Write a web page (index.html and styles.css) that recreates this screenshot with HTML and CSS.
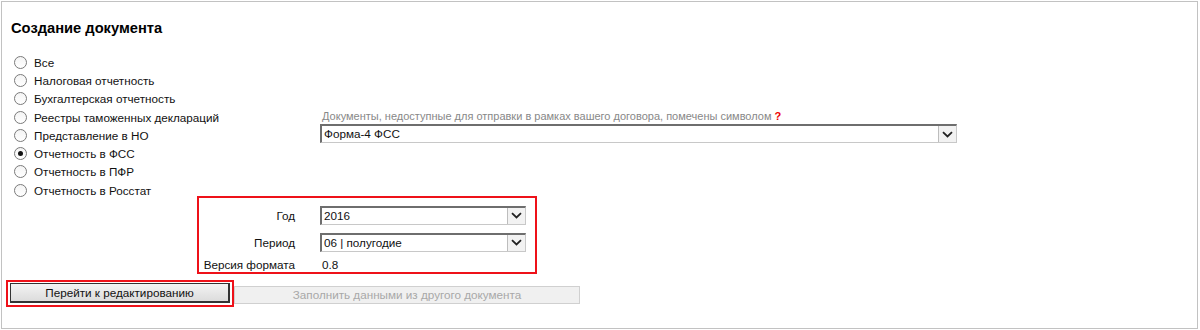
FILE: index.html
```html
<!DOCTYPE html>
<html lang="ru">
<head>
    <meta charset="UTF-8">
    <title>Создание документа</title>
    <link rel="stylesheet" href="styles.css">
</head>
<body>
    <div class="panel">
        <h1 class="title">Создание документа</h1>

        <div class="top">
            <ul class="kinds">
                <li><span class="radio"></span>Все</li>
                <li><span class="radio"></span>Налоговая отчетность</li>
                <li><span class="radio"></span>Бухгалтерская отчетность</li>
                <li><span class="radio"></span>Реестры таможенных деклараций</li>
                <li><span class="radio"></span>Представление в НО</li>
                <li><span class="radio checked"></span>Отчетность в ФСС</li>
                <li><span class="radio"></span>Отчетность в ПФР</li>
                <li><span class="radio"></span>Отчетность в Росстат</li>
            </ul>

            <div class="doc">
                <div class="hint">Документы, недоступные для отправки в рамках вашего договора, помечены символом <span class="mark">?</span></div>
                <div class="select wide">
                    <span class="value">Форма-4 ФСС</span>
                    <span class="arrow"><svg width="11" height="7" viewBox="0 0 11 7"><path d="M1 1.2 L5.5 5.5 L10 1.2" fill="none" stroke="#222" stroke-width="1.8"/></svg></span>
                </div>
            </div>
        </div>

        <div class="params">
            <div class="label">Год</div>
            <div class="select">
                <span class="value">2016</span>
                <span class="arrow"><svg width="11" height="7" viewBox="0 0 11 7"><path d="M1 1.2 L5.5 5.5 L10 1.2" fill="none" stroke="#222" stroke-width="1.8"/></svg></span>
            </div>

            <div class="label">Период</div>
            <div class="select">
                <span class="value">06 | полугодие</span>
                <span class="arrow"><svg width="11" height="7" viewBox="0 0 11 7"><path d="M1 1.2 L5.5 5.5 L10 1.2" fill="none" stroke="#222" stroke-width="1.8"/></svg></span>
            </div>

            <div class="label last">Версия формата</div>
            <div class="plain last">0.8</div>
        </div>

        <div class="actions">
            <div class="highlight">
                <button class="btn">Перейти к редактированию</button>
            </div>
            <button class="btn disabled" disabled>Заполнить данными из другого документа</button>
        </div>
    </div>
</body>
</html>
```

FILE: styles.css
```css
body {
    margin: 0;
    padding: 0;
    background: #fff;
    font-family: 'Liberation Sans', Arial, sans-serif;
    font-size: 11.7px;
    color: #111;
}
.panel {
    margin: 1px 2px 0 1px;
    height: 326px;
    border: 1px solid #c2c2c2;
    padding: 0 9px;
}
.title {
    margin: 17px 0 0;
    font-size: 14.7px;
    line-height: 18px;
    font-weight: bold;
    color: #000;
}
.top {
    display: flex;
    margin-top: 16px;
}
.kinds {
    list-style: none;
    margin: 0;
    padding: 0;
    width: 309px;
}
.kinds li {
    display: flex;
    align-items: center;
    height: 18.3px;
    padding-left: 3px;
}
.radio {
    width: 11px;
    height: 11px;
    border: 1px solid #7a7a7a;
    border-radius: 50%;
    background: linear-gradient(#f4f4f4, #fff);
    margin-right: 7px;
    position: relative;
    flex-shrink: 0;
}
.radio.checked::after {
    content: "";
    position: absolute;
    left: 3px;
    top: 3px;
    width: 5px;
    height: 5px;
    border-radius: 50%;
    background: #111;
}
.doc {
    width: 637px;
    padding-top: 57px;
}
.hint {
    font-size: 11px;
    line-height: 13px;
    color: #888;
    padding-left: 2px;
}
.mark {
    color: #e00;
    font-weight: bold;
}
.select {
    display: flex;
    align-items: stretch;
    height: 19px;
    box-sizing: border-box;
    border: 1px solid #c8c8c8;
    border-top: 2px solid #6e6e6e;
    border-left: 2px solid #6e6e6e;
    background: #fff;
}
.select.wide {
    margin-top: 1px;
}
.select .value {
    flex: 1;
    line-height: 16px;
    padding-left: 2px;
}
.select .arrow {
    width: 17px;
    display: flex;
    align-items: center;
    justify-content: center;
    background: #f2f2f2;
    border-left: 1px solid #bdbdbd;
}
.params {
    display: grid;
    grid-template-columns: 96px 206px;
    column-gap: 25px;
    row-gap: 8px;
    align-items: center;
    width: 340px;
    box-sizing: border-box;
    margin: -3px 0 0 186px;
    padding: 7px 0 0 0;
    height: 78px;
    border: 2px solid #ee1119;
}
.params .label {
    text-align: right;
}
.params .last {
    margin-top: -2px;
    line-height: 14px;
}
.params .plain {
    padding-left: 2px;
}
.actions {
    display: flex;
    align-items: center;
    margin: 6px 0 0 -5px;
}
.highlight {
    border: 2px solid #ee1119;
    padding: 1px 2px 2px 2px;
}
.btn {
    font-family: 'Liberation Sans', Arial, sans-serif;
    font-size: 11.7px;
    height: 20px;
    width: 220px;
    padding: 0;
    border: 1px solid #333;
    border-right-width: 2px;
    border-bottom-width: 2px;
    background: linear-gradient(#f3f3f3, #dcdcdc);
    color: #111;
}
.btn.disabled {
    width: 346px;
    height: 18px;
    margin-top: 2px;
    border: 1px solid #d0d0d0;
    background: #f0f0f0;
    color: #a8a8a8;
}
```
